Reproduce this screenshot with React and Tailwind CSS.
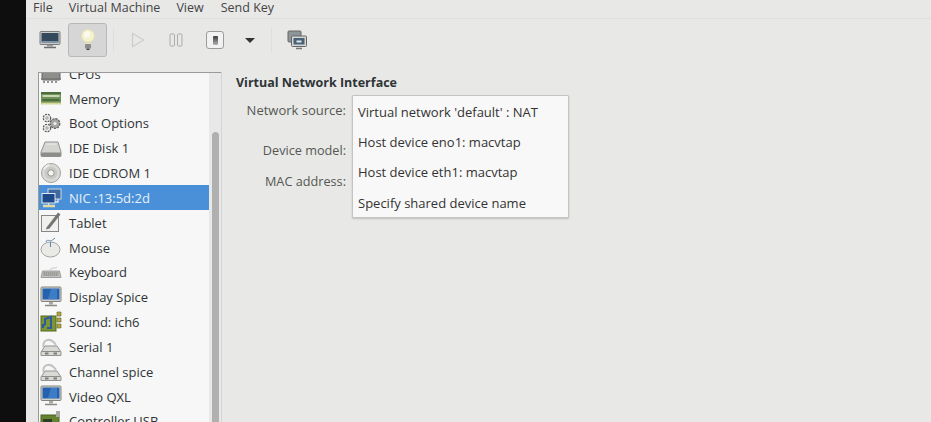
import React from "react";

/* ---- hand drawn device icons, 22x22 box ---- */
function Ico({ children }) {
  return (
    <svg width="22" height="22" viewBox="0 0 22 22" className="shrink-0">
      {children}
    </svg>
  );
}

const CpuIcon = () => (
  <Ico>
    <rect x="2" y="3" width="18" height="15" rx="1" fill="#8d8f8b" stroke="#666" />
    <path d="M1 17h20M4 19v2M8 19v2M12 19v2M16 19v2" stroke="#777" strokeWidth="1.5" />
  </Ico>
);
const MemoryIcon = () => (
  <Ico>
    <rect x="1" y="5" width="20" height="11" fill="#6f9257" />
    <rect x="1" y="5" width="20" height="2" fill="#4f6d3a" />
    <rect x="2.5" y="8" width="17" height="2" fill="#c9d7b8" />
    <rect x="2.5" y="12" width="17" height="2" fill="#4b6a3e" />
    <path d="M1 16.5h20" stroke="#cfd08a" strokeWidth="2" strokeDasharray="3 .6" />
  </Ico>
);
const GearsIcon = () => (
  <Ico>
    <g stroke="#5c5c5a" strokeWidth="1.2">
      <circle cx="7" cy="6" r="3.7" fill="#ececea" strokeDasharray="2 1" />
      <circle cx="15" cy="11.5" r="4.8" fill="#a6a6a2" strokeDasharray="2.2 1" />
      <circle cx="7" cy="16" r="3.7" fill="#ececea" strokeDasharray="2 1" />
    </g>
    <circle cx="7" cy="6" r="1.2" fill="#f7f7f7" stroke="#777" strokeWidth=".7" />
    <circle cx="15" cy="11.5" r="1.6" fill="#eee" />
    <circle cx="7" cy="16" r="1.2" fill="#f7f7f7" stroke="#777" strokeWidth=".7" />
  </Ico>
);
const DiskIcon = () => (
  <Ico>
    <path d="M5 5h13l3 10v3.5a1 1 0 0 1-1 1H2a1 1 0 0 1-1-1V15z" fill="#d4d4d1" stroke="#93938f" />
    <rect x="1" y="15.5" width="20" height="4" rx="1.2" fill="#8c8c89" />
    <path d="M6 7h10" stroke="#ededeb" />
  </Ico>
);
const CdIcon = () => (
  <Ico>
    <circle cx="11" cy="11" r="9.5" fill="#dadad7" stroke="#a2a29f" />
    <circle cx="11" cy="11" r="6.5" fill="#c9c9c6" />
    <circle cx="11" cy="11" r="3.2" fill="#f4f4f2" stroke="#94948f" />
    <path d="M4 7a8 8 0 0 1 5-4" stroke="#f5f5f3" fill="none" strokeWidth="1.5" />
  </Ico>
);
const NicIcon = () => (
  <Ico>
    <rect x="8" y="2" width="13" height="10" fill="#3e6aa3" stroke="#cfd7e0" />
    <rect x="2" y="6.5" width="13" height="9.5" fill="#1e4a8c" stroke="#e2e6ea" />
    <path d="M3 19h12" stroke="#e4dba4" strokeWidth="2.5" />
    <path d="M8.5 16v2M18 12v3h-3" stroke="#dfe3e8" strokeWidth="1.3" fill="none" />
  </Ico>
);
const TabletIcon = () => (
  <Ico>
    <rect x="1.5" y="4.5" width="17" height="16" fill="#f0f0ee" stroke="#85878a" />
    <path d="M6.5 16.5 18 1.5l2.5 2L9.5 17.5l-3.5 1z" fill="#747674" />
  </Ico>
);
const MouseIcon = () => (
  <Ico>
    <path d="M6 6c0-3 5-1 5-1s3-2 4-3" stroke="#5d86b3" fill="none" />
    <ellipse cx="10.5" cy="13.5" rx="9.5" ry="7.5" fill="#e9e9e5" stroke="#a5a5a0" />
    <path d="M10.5 6v5" stroke="#5d86b3" />
  </Ico>
);
const KeyboardIcon = () => (
  <Ico>
    <path d="M10 9c1-3 5-1 7-3" stroke="#c4c4c2" fill="none" />
    <path d="M2.5 10h17l1.5 6.5H1z" fill="#c2c2be" stroke="#8e8e8a" strokeWidth=".8" />
    <path d="M3.5 12h15M3.5 14h15" stroke="#6a6a67" strokeWidth="1.2" strokeDasharray="1.4 .6" />
  </Ico>
);
const DisplayIcon = () => (
  <Ico>
    <rect x="1" y="1" width="20" height="14.5" rx="1" fill="#cfcfcc" stroke="#85857f" />
    <rect x="2.5" y="2.5" width="17" height="11" fill="#2462b0" />
    <path d="M11 3 8 13h9V3z" fill="#3f7cc6" />
    <path d="M9 16h4v2.5H9z" fill="#a8a8a5" />
    <path d="M5 19.5h12" stroke="#8a8a87" strokeWidth="1.5" />
  </Ico>
);
const SoundIcon = () => (
  <Ico>
    <rect x="1" y="5" width="15" height="15" fill="#7b9632" stroke="#55681f" />
    <path d="M5 14V8l6-2v7" stroke="#2d5aa3" strokeWidth="2" fill="none" />
    <path d="M5 14H3v3M11 13v4H7" stroke="#2d5aa3" strokeWidth="2" fill="none" />
    <path d="M17 1h4v4h-4zM17 7h4v4h-4zM17 13h4v4h-4z" fill="#b9a04c" stroke="#55681f" strokeWidth=".6" />
  </Ico>
);
const SerialIcon = () => (
  <Ico>
    <path d="M3.5 11C2 3 11 1 16 9" stroke="#c2c2be" strokeWidth="2" fill="none" />
    <path d="M5 10h12l4 6v3.5H1V16z" fill="#d9d9d5" stroke="#93938f" />
    <path d="M2 15.5h18" stroke="#8c8c88" />
    <rect x="5" y="16.5" width="3.5" height="2" fill="#7a7a77" />
    <rect x="13.5" y="16.5" width="3.5" height="2" fill="#7a7a77" />
  </Ico>
);
const CardIcon = () => (
  <Ico>
    <rect x="1" y="5" width="18" height="15" fill="#66832f" stroke="#4d6222" />
    <rect x="3" y="9" width="9" height="4" fill="#2f3f22" />
    <path d="M16 1h4v6h-4z" fill="#a7a7a4" />
  </Ico>
);

const items = [
  { label: "CPUs", Icon: CpuIcon },
  { label: "Memory", Icon: MemoryIcon },
  { label: "Boot Options", Icon: GearsIcon },
  { label: "IDE Disk 1", Icon: DiskIcon },
  { label: "IDE CDROM 1", Icon: CdIcon },
  { label: "NIC :13:5d:2d", Icon: NicIcon, selected: true },
  { label: "Tablet", Icon: TabletIcon },
  { label: "Mouse", Icon: MouseIcon },
  { label: "Keyboard", Icon: KeyboardIcon },
  { label: "Display Spice", Icon: DisplayIcon },
  { label: "Sound: ich6", Icon: SoundIcon },
  { label: "Serial 1", Icon: SerialIcon },
  { label: "Channel spice", Icon: SerialIcon },
  { label: "Video QXL", Icon: DisplayIcon },
  { label: "Controller USB", Icon: CardIcon },
];

function Toolbar() {
  return (
    <div className="flex items-center h-[42px] pl-[7px]">
      {/* monitor */}
      <div className="w-[34px] flex justify-center">
        <svg width="22" height="20" viewBox="0 0 22 20">
          <rect x="1" y="1.5" width="20" height="13" rx="1" fill="#c9cbca" stroke="#7c7c7c" />
          <rect x="2.5" y="3" width="17" height="9" fill="#34495c" />
          <rect x="2.5" y="11" width="17" height="2" fill="#7d93a5" />
          <path d="M8 15h6v1.5H8z" fill="#999" />
          <path d="M5 17.5h12" stroke="#6d6d6d" strokeWidth="1.5" />
        </svg>
      </div>
      {/* lightbulb, toggled */}
      <div className="ml-[1px] w-[39px] h-[34px] flex items-center justify-center rounded-[3px] bg-[#d6d6d6] border border-[#b8b8b8]">
        <svg width="16" height="24" viewBox="0 0 16 24">
          <circle cx="8" cy="8" r="6.5" fill="#f5f2d2" stroke="#e2deb6" />
          <circle cx="7" cy="6.5" r="3" fill="#fbfaef" />
          <path d="M5.5 13h5l-.5 3H6z" fill="#e6e1b8" />
          <rect x="5" y="16" width="6" height="4.5" rx="1" fill="#8c8e8d" />
          <rect x="6.5" y="20.5" width="3" height="1.5" fill="#444" />
        </svg>
      </div>
      <div className="ml-[6px] w-px h-[24px] bg-[#dedede]" />
      {/* run */}
      <div className="ml-[16px] w-[16px] flex justify-center">
        <svg width="14" height="16" viewBox="0 0 14 16">
          <path d="M1.5 1.5v13L13 8z" fill="none" stroke="#cbcbcb" strokeWidth="1.2" />
        </svg>
      </div>
      {/* pause */}
      <div className="ml-[22px] w-[16px] flex justify-center">
        <svg width="14" height="14" viewBox="0 0 14 14">
          <rect x="1" y="1" width="4.5" height="12" rx="1" fill="none" stroke="#ababab" />
          <rect x="8.5" y="1" width="4.5" height="12" rx="1" fill="none" stroke="#ababab" />
        </svg>
      </div>
      {/* power */}
      <div className="ml-[22px] w-[18px] h-[18px] flex items-center justify-center rounded-[3px] border border-[#9c9c9c] bg-[#f2f2f2]">
        <div className="w-[5px] h-[9px] rounded-[1px] bg-gradient-to-b from-[#3e3e3e] to-[#b5b5b5]" />
      </div>
      {/* dropdown */}
      <div className="ml-[21px] w-0 h-0 border-l-[5px] border-r-[5px] border-t-[5px] border-l-transparent border-r-transparent border-t-[#333]" />
      <div className="ml-[16px] w-px h-[24px] bg-[#dedede]" />
      {/* snapshots */}
      <div className="ml-[15px]">
        <svg width="20" height="20" viewBox="0 0 20 20">
          <rect x="1" y="1" width="13" height="11" rx="1" fill="#8f9699" stroke="#666" />
          <rect x="4.5" y="6" width="15" height="10.5" rx="1" fill="#d5d7d6" stroke="#666" />
          <rect x="6.5" y="8" width="11" height="6.5" fill="#4a6275" />
          <path d="M9.5 10.5h5v2h-5z" fill="#dfe5e8" />
          <path d="M9 18.5h6" stroke="#777" strokeWidth="1.5" />
        </svg>
      </div>
    </div>
  );
}

function Sidebar() {
  return (
    <div className="ml-[12px] w-[183px] h-[350px] flex border-t border-l border-[#9a9a9a] overflow-hidden">
      <div className="w-[171px] bg-[#f7f7f7] overflow-hidden">
        <div className="-mt-[12px]">
          {items.map(({ label, Icon, selected }) => (
            <div
              key={label}
              className={
                "h-[24.85px] flex items-center gap-[7px] pl-[1px] text-[13px] " +
                (selected ? "bg-[#4a90d9] text-[#e8f0f8]" : "text-[#2e3436]")
              }
            >
              <Icon />
              <span className="pt-[2px]">{label}</span>
            </div>
          ))}
        </div>
      </div>
      <div className="w-[12px] bg-[#e8e8e8] pl-[3px] pt-[59px]">
        <div className="w-[7px] h-[300px] rounded-t-[4px] bg-[#b0b0b0]" />
      </div>
    </div>
  );
}

function Details() {
  return (
    <div className="relative flex-1 h-[350px] border-l border-[#d5d5d5] pl-[14px] pt-[2px] text-[13px] text-[#555753]">
      <div className="font-bold text-[#2e3436] text-[12.5px]">Virtual Network Interface</div>
      <div className="w-[110px] text-right mt-[8px]">Network source:</div>
      <div className="w-[110px] text-right mt-[21px] text-[12.7px]">Device model:</div>
      <div className="w-[110px] text-right mt-[12px] text-[12.7px]">MAC address:</div>
      {/* combo popup */}
      <div className="absolute left-[130px] top-[23px] w-[217px] h-[123px] pt-[1.5px] bg-[#f8f8f8] border border-[#c4c4c4] rounded-[1px] shadow-[0_1px_2px_rgba(0,0,0,0.18)] text-[#333]">
        {[
          "Virtual network 'default' : NAT",
          "Host device eno1: macvtap",
          "Host device eth1: macvtap",
          "Specify shared device name",
        ].map((t) => (
          <div key={t} className="h-[30.3px] flex items-center pl-[5px]">
            {t}
          </div>
        ))}
      </div>
    </div>
  );
}

export default function App() {
  return (
    <div
      className="w-[931px] h-[422px] flex overflow-hidden bg-[#e8e8e7]"
      style={{ fontFamily: '"Open Sans", "Noto Sans", sans-serif' }}
    >
      <div className="w-[26px] bg-[#0e0e0e] shrink-0" />
      <div className="flex-1 flex flex-col">
        <div className="h-[19px] pt-[1px] flex items-start pl-[7px] text-[12.5px] leading-[13px] text-[#444] border-b border-[#dfdfdf]">
          <span>File</span>
          <span className="ml-[16px] tracking-[0.05px]">Virtual Machine</span>
          <span className="ml-[16px]">View</span>
          <span className="ml-[17px]">Send Key</span>
        </div>
        <Toolbar />
        <div className="flex pt-[11px]">
          <Sidebar />
          <Details />
        </div>
      </div>
    </div>
  );
}
